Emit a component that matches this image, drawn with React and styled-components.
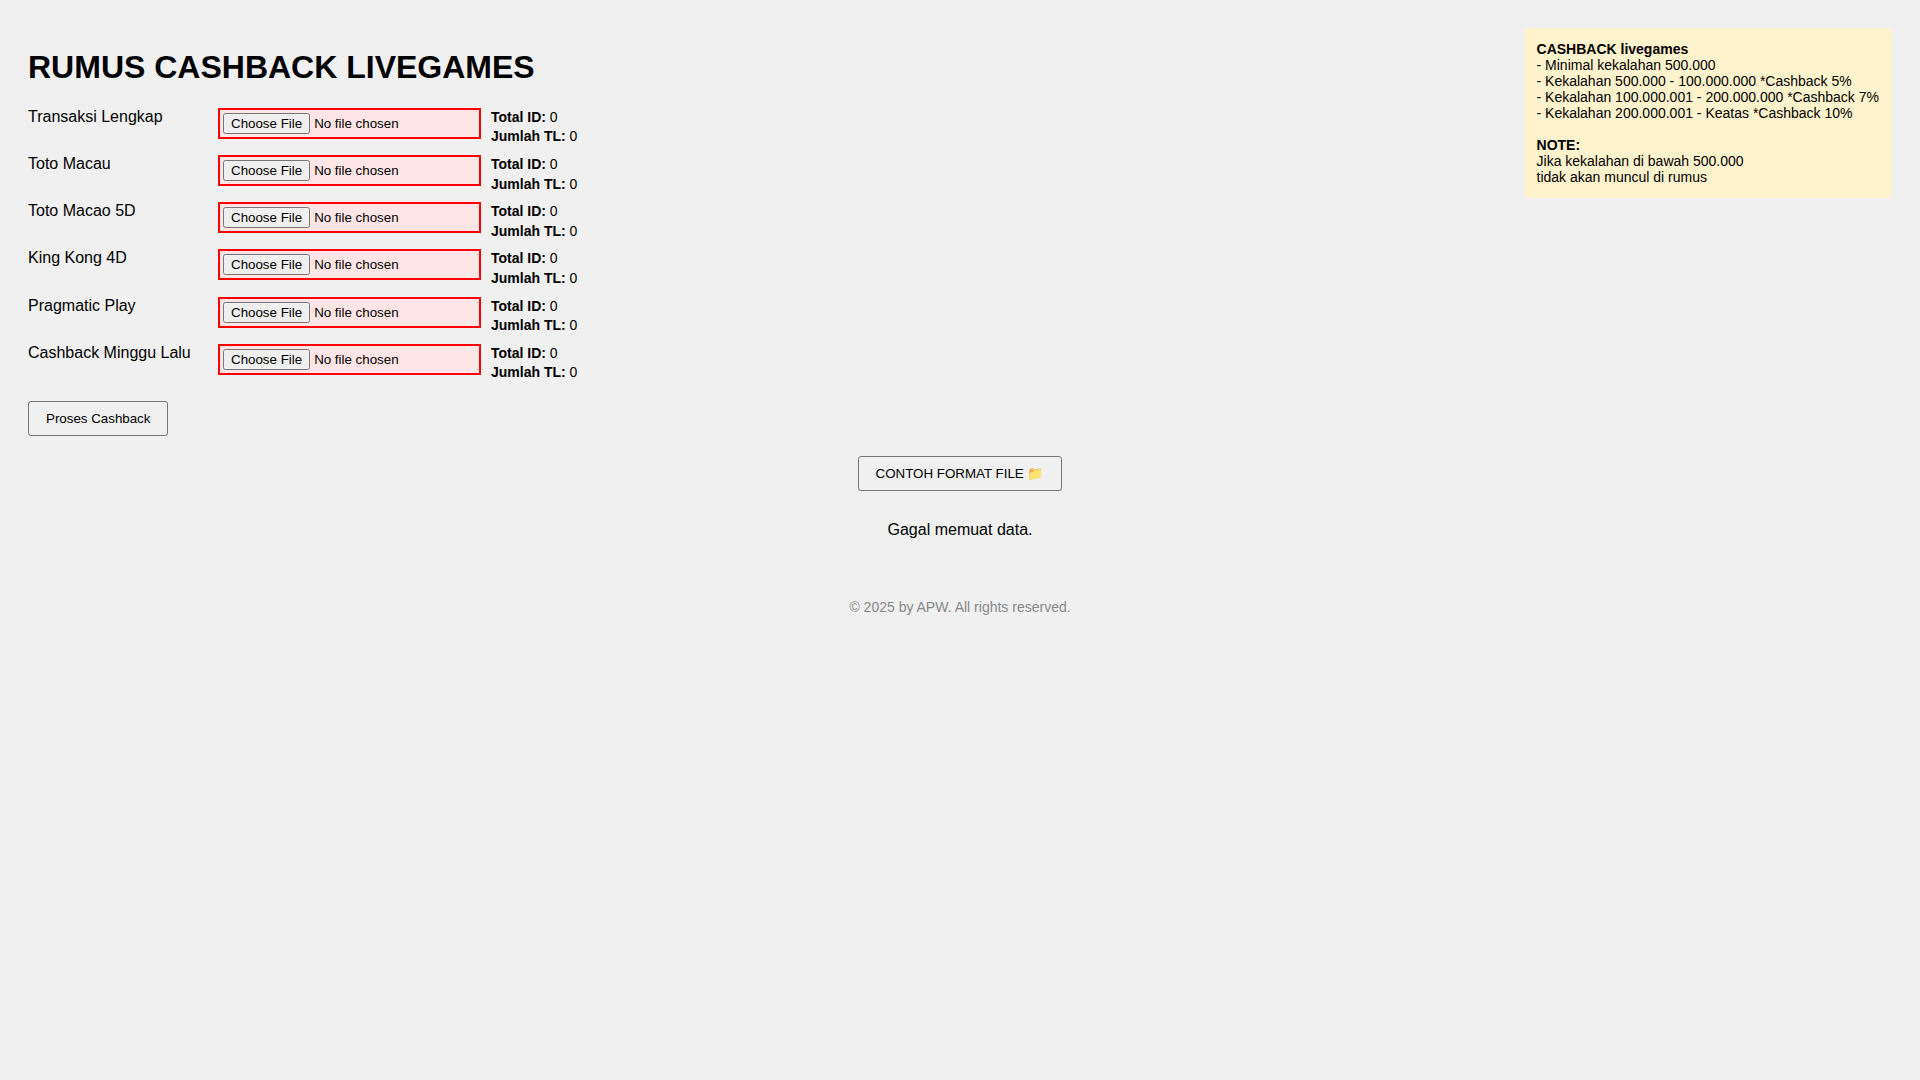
import React from 'react'
import styled, { createGlobalStyle } from 'styled-components'

const GlobalStyle = createGlobalStyle`
  html, body {
    margin: 0;
    padding: 0;
    background: #f0f0f0;
  }
  body {
    font-family: "Liberation Sans", Arial, sans-serif;
    font-size: 16px;
    color: #000;
  }
`;

const Page = styled.div`
  padding: 28px;
  min-height: 1080px;
  box-sizing: border-box;
`;

const Top = styled.div`
  display: flex;
  justify-content: space-between;
  align-items: flex-start;
`;

const Title = styled.h1`
  font-size: 32px;
  font-weight: bold;
  margin: 21px 0 21.7px;
`;

const Row = styled.div`
  display: flex;
  align-items: flex-start;
  margin-bottom: 8.05px;
`;

const Label = styled.label`
  width: 190px;
  line-height: 18px;
`;

const FileInput = styled.input`
  width: 263px;
  height: 31px;
  box-sizing: border-box;
  border: 2px solid red;
  background: #ffe5e5;
  padding: 3px;
  font-size: 13.33px;
  font-family: "Liberation Sans", Arial, sans-serif;
`;

const Stats = styled.div`
  margin-left: 10px;
  font-size: 14px;
  line-height: 19.6px;
`;

const NoteBox = styled.div`
  background: #fff3cd;
  border-radius: 5px;
  padding: 13px;
  font-size: 14px;
  line-height: 16px;
  white-space: pre-line;
`;

const Button = styled.button`
  display: block;
  padding: 0 17px;
  font-size: 13.33px;
  font-family: "Liberation Sans", Arial, sans-serif;
  background: #f0f0f0;
  color: #000;
  border: 1px solid #767676;
  border-radius: 3px;
  height: 35px;
`;

const ProcessButton = styled(Button)`
  margin-top: 17.85px;
`;

const Center = styled.div`
  display: flex;
  flex-direction: column;
  align-items: center;
  margin-top: 20px;
`;

const Status = styled.p`
  margin: 30px 0 0;
`;

const Footer = styled.p`
  margin: 60px 0 0;
  font-size: 14px;
  color: #888;
`;

const sources = [
  'Transaksi Lengkap',
  'Toto Macau',
  'Toto Macao 5D',
  'King Kong 4D',
  'Pragmatic Play',
  'Cashback Minggu Lalu',
]

const App = () => {
  return (
    <Page>
      <GlobalStyle />
      <Top>
        <div>
          <Title>RUMUS CASHBACK LIVEGAMES</Title>
          {sources.map((name) => (
            <Row key={name}>
              <Label>{name}</Label>
              <FileInput type="file" />
              <Stats>
                <div><b>Total ID:</b> 0</div>
                <div><b>Jumlah TL:</b> 0</div>
              </Stats>
            </Row>
          ))}
          <ProcessButton>Proses Cashback</ProcessButton>
        </div>
        <NoteBox>
          <b>CASHBACK livegames</b>
          {'\n- Minimal kekalahan 500.000\n- Kekalahan 500.000 - 100.000.000 *Cashback 5%\n- Kekalahan 100.000.001 - 200.000.000 *Cashback 7%\n- Kekalahan 200.000.001 - Keatas *Cashback 10%\n\n'}
          <b>NOTE:</b>
          {'\nJika kekalahan di bawah 500.000\ntidak akan muncul di rumus'}
        </NoteBox>
      </Top>
      <Center>
        <Button>CONTOH FORMAT FILE 📁</Button>
        <Status>Gagal memuat data.</Status>
        <Footer>© 2025 by APW. All rights reserved.</Footer>
      </Center>
    </Page>
  )
}

export default App
